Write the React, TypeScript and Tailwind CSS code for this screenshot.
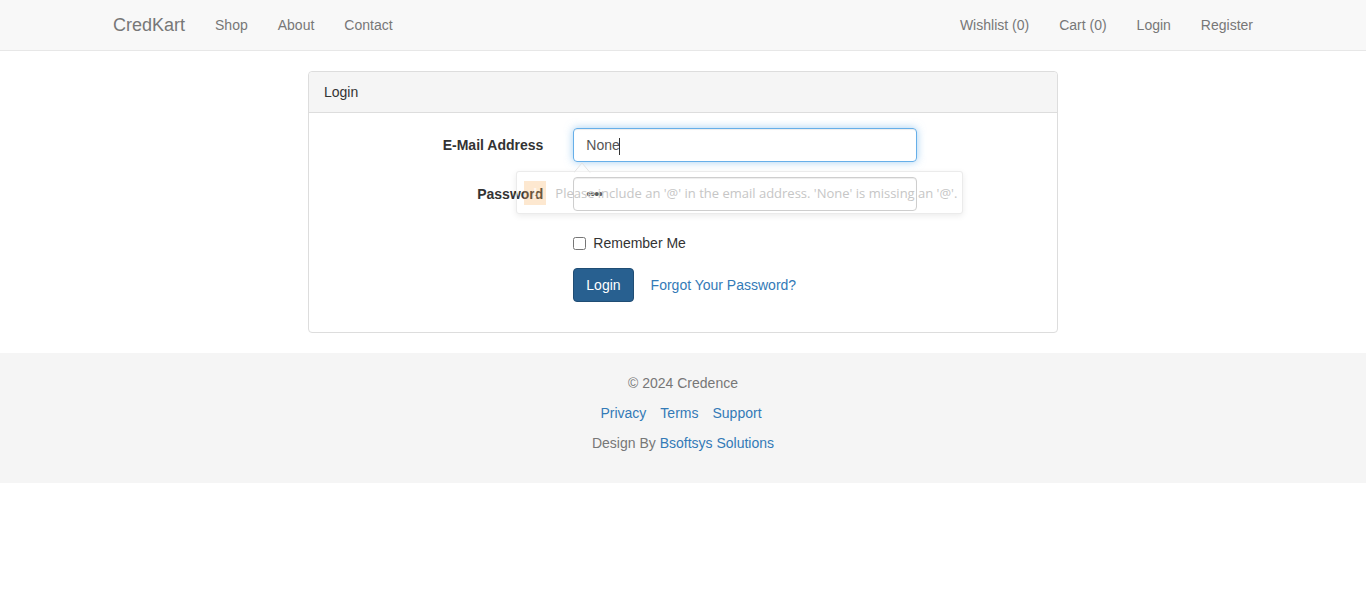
import { useState } from "react";

const font = "font-['Liberation_Sans',Arial,sans-serif]";

function Navbar() {
  return (
    <nav className="h-[51px] border-b border-[#e7e7e7] bg-[#f8f8f8]">
      <div className="mx-auto flex h-[50px] w-[1170px] items-stretch px-0">
        <a className="px-[15px] py-[15px] text-[18px] leading-[20px] text-[#777]">
          CredKart
        </a>
        <ul className="flex">
          {["Shop", "About", "Contact"].map((item) => (
            <li key={item}>
              <a className="block px-[15px] py-[15px] text-[14px] leading-[20px] text-[#777]">
                {item}
              </a>
            </li>
          ))}
        </ul>
        <ul className="ml-auto flex">
          {["Wishlist (0)", "Cart (0)", "Login", "Register"].map((item) => (
            <li key={item}>
              <a className="block px-[15px] py-[15px] text-[14px] leading-[20px] text-[#777]">
                {item}
              </a>
            </li>
          ))}
        </ul>
      </div>
    </nav>
  );
}

// browser's native validation bubble, caught mid fade-in
function ValidationBubble() {
  return (
    <div className="pointer-events-none absolute left-[-42px] top-[43px] z-10 h-[43px] w-[447px] rounded-[3px] border border-[#e6e6e6]/80 bg-white/5 shadow-[0_2px_6px_rgba(0,0,0,0.08)]">
      <svg
        className="absolute left-[57px] top-[-10px]"
        width="18"
        height="11"
        viewBox="0 0 18 11"
      >
        <path d="M0 10.5 L8 1 L16 10.5" fill="white" fillOpacity="0.3" stroke="#e3e3e3" />
      </svg>
      <div className="flex h-full items-center pl-[7px]">
        <span className="flex h-[24px] w-[22px] shrink-0 items-center justify-center bg-[#f9a443]/25 text-[15px] font-bold leading-none text-white/70">
          !
        </span>
        <span className="ml-[9px] whitespace-nowrap font-['Open_Sans',sans-serif] text-[13px] text-[#c6c6c6]">
          Please include an '@' in the email address. 'None' is missing an '@'.
        </span>
      </div>
    </div>
  );
}

function LoginPanel() {
  const [email, setEmail] = useState("None");
  const [password, setPassword] = useState("abcd");

  return (
    <div className="mx-auto w-[750px] rounded-[4px] border border-[#ddd] bg-white">
      <div className="rounded-t-[4px] border-b border-[#ddd] bg-[#f5f5f5] px-[15px] py-[10px] text-[14px] leading-[20px] text-[#333]">
        Login
      </div>
      <div className="px-0 pt-[15px] pb-[15px]">
        <form className="text-[14px] leading-[20px] text-[#333]">
          <div className="mb-[15px] flex">
            <label className="w-[249.33px] pr-[15px] pt-[7px] text-right font-bold">
              E-Mail Address
            </label>
            <div className="relative w-[374px] px-[15px]">
              <input
                value={email}
                onChange={(e) => setEmail(e.target.value)}
                className="h-[34px] w-full rounded-[4px] border border-[#66afe9] px-[12px] text-[14px] text-[#555] caret-[#333] shadow-[inset_0_1px_1px_rgba(0,0,0,0.075),0_0_8px_rgba(102,175,233,0.6)] outline-none"
              />
              <span className="pointer-events-none absolute left-[27px] top-[7px] text-[14px] leading-[20px] text-transparent">
                None<span className="inline-block h-[17px] w-px translate-y-[3px] bg-[#333]" />
              </span>
              <ValidationBubble />
            </div>
          </div>

          <div className="mb-[15px] flex">
            <label className="w-[249.33px] pr-[15px] pt-[7px] text-right font-bold">
              Password
            </label>
            <div className="w-[374px] px-[15px]">
              <input
                type="password"
                value={password}
                onChange={(e) => setPassword(e.target.value)}
                className="h-[34px] w-full rounded-[4px] border border-[#ccc] px-[12px] text-[14px] tracking-[-1px] text-[#555] shadow-[inset_0_1px_1px_rgba(0,0,0,0.075)] outline-none"
              />
            </div>
          </div>

          <div className="mb-[15px] flex">
            <div className="ml-[249.33px] w-[374px] px-[15px]">
              <label className="flex min-h-[27px] items-center gap-[7px] pt-[7px]">
                <input type="checkbox" className="m-0 h-[13px] w-[13px]" />
                <span>Remember Me</span>
              </label>
            </div>
          </div>

          <div className="mb-[15px] flex">
            <div className="ml-[249.33px] flex w-[374px] items-center px-[15px]">
              <button
                type="button"
                className="h-[34px] rounded-[4px] border border-[#204d74] bg-[#286090] px-[12px] text-[14px] text-white"
              >
                Login
              </button>
              <a className="ml-[5px] px-[12px] py-[6px] text-[14px] text-[#337ab7]">
                Forgot Your Password?
              </a>
            </div>
          </div>
        </form>
      </div>
    </div>
  );
}

function Footer() {
  return (
    <footer className="mt-[20px] flex h-[130px] flex-col items-center gap-[10px] bg-[#f5f5f5] pt-[20px] text-[14px] leading-[20px] text-[#777]">
      <p>© 2024 Credence</p>
      <p className="flex gap-[14px] pr-[4px] text-[#337ab7]">
        <a>Privacy</a>
        <a>Terms</a>
        <a>Support</a>
      </p>
      <p>
        Design By <a className="text-[#337ab7]">Bsoftsys Solutions</a>
      </p>
    </footer>
  );
}

export default function App() {
  return (
    <div className={`${font} min-h-[589px] bg-white`}>
      <Navbar />
      <div className="mt-[20px]">
        <LoginPanel />
      </div>
      <Footer />
    </div>
  );
}
